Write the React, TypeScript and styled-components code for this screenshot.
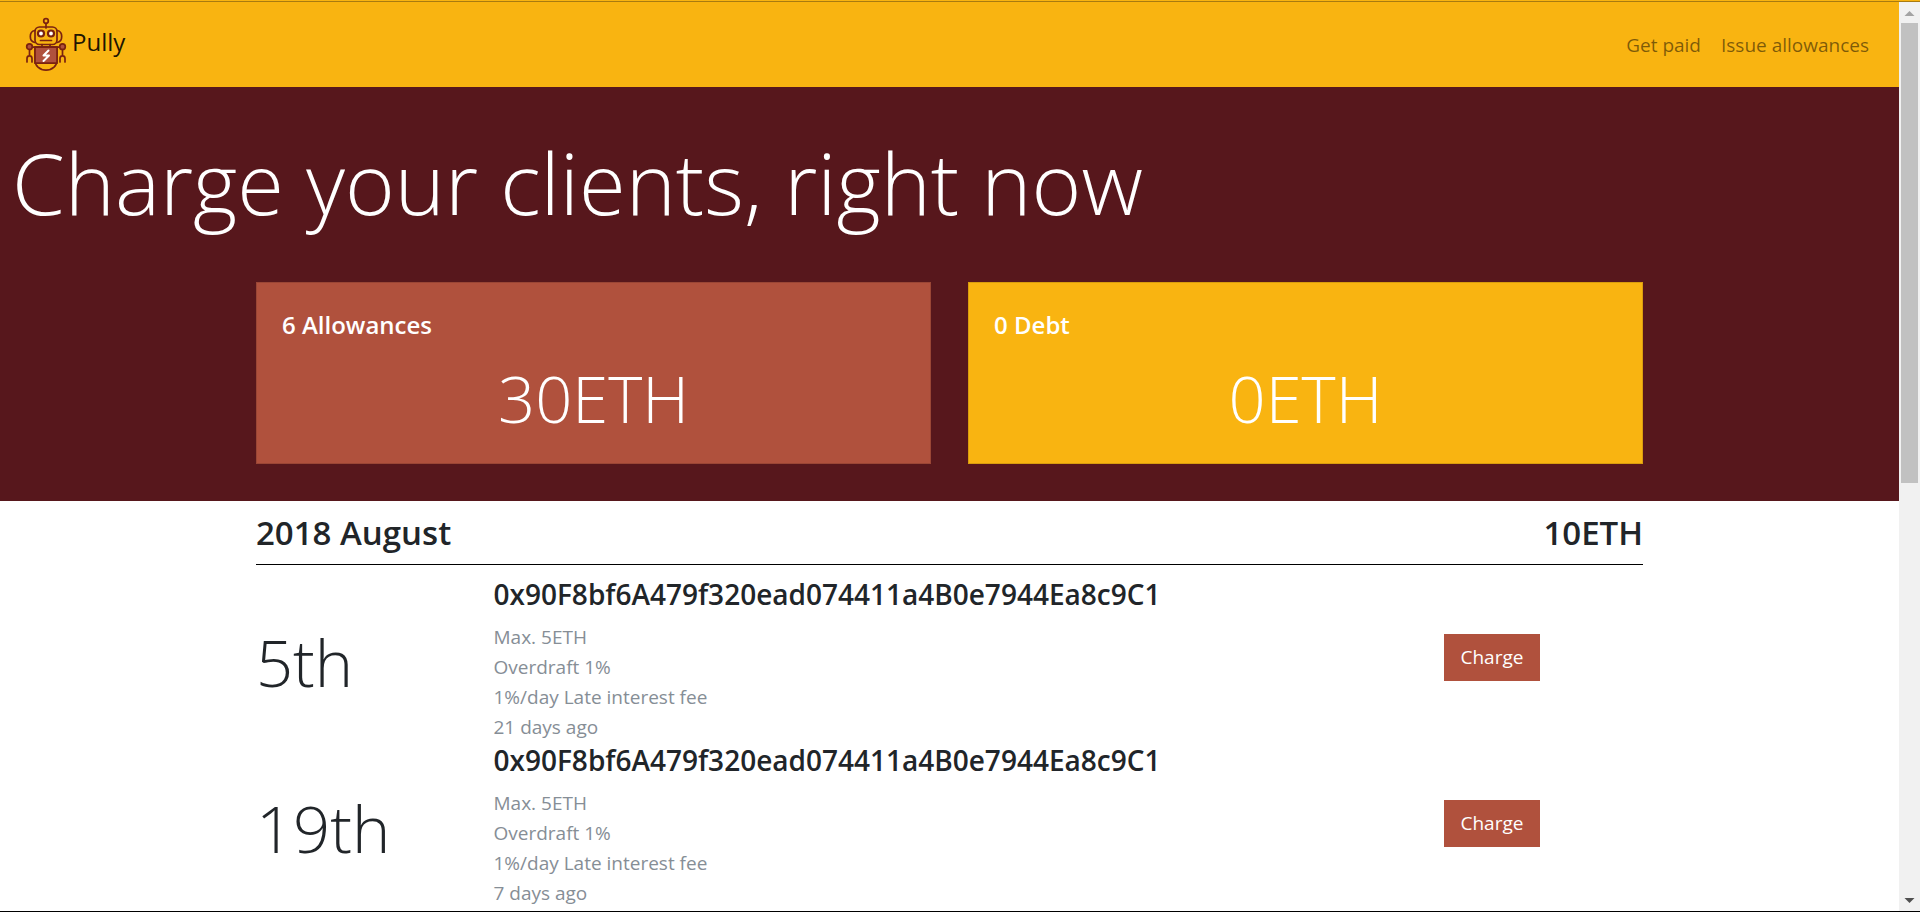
import React from "react";
import styled, { createGlobalStyle } from "styled-components";

const amber = "#f9b411";
const wine = "#57171c";
const brick = "#b0513d";
const ink = "#212529";

const GlobalStyle = createGlobalStyle`
  *, *::before, *::after { box-sizing: border-box; }
  body {
    margin: 0;
    overflow: hidden;
    background: #fff;
    color: ${ink};
    font: 400 19px/30px "Open Sans", "Noto Sans", sans-serif;
  }
  h1, h2, h3, h4, p { margin: 0; }
`;

const Shell = styled.div`
  display: flex;
  flex-direction: column;
  height: 100vh;
  border-bottom: 1px solid #000;
`;

const TopEdge = styled.div`
  flex: none;
  height: 2px;
  background: ${amber};
  border-bottom: 1px solid #a97b10;
`;

const Viewport = styled.div`
  flex: 1;
  display: flex;
  min-height: 0;
`;

const Page = styled.div`
  flex: 1;
  min-width: 0;
  overflow: hidden;
`;

const Nav = styled.nav`
  display: flex;
  align-items: center;
  justify-content: space-between;
  height: 85px;
  padding: 0 20px;
  background: ${amber};
`;

const Brand = styled.a`
  display: flex;
  align-items: center;
  gap: 2px;
  color: rgba(0, 0, 0, 0.9);
  font-size: 24px;
  line-height: 38px;
  text-decoration: none;

  span {
    padding-bottom: 6px;
  }
`;

const NavLinks = styled.div`
  display: flex;
  gap: 20px;
  padding-right: 10px;
`;

const NavLink = styled.a`
  color: rgba(0, 0, 0, 0.5);
  text-decoration: none;
`;

const Hero = styled.header`
  padding: 41px 0 37px;
  background: ${wine};
  color: #fff;
`;

const HeroTitle = styled.h1`
  padding: 0 12px;
  margin-bottom: 46px;
  font-size: 85px;
  line-height: 108px;
  font-weight: 300;
`;

const Container = styled.div`
  max-width: 1425px;
  margin: 0 auto;
  padding: 0 19px;
`;

const Cards = styled.div`
  display: grid;
  grid-template-columns: 1fr 1fr;
  gap: 37px;
`;

const Card = styled.section<{ $tone: string }>`
  padding: 27px 25px 23px;
  border: 1px solid rgba(0, 0, 0, 0.125);
  background: ${(p) => p.$tone};
`;

const CardTitle = styled.h2`
  margin-bottom: 16px;
  font-size: 24px;
  line-height: 30px;
  font-weight: 600;
`;

const BigText = styled.p`
  font-size: 65px;
  line-height: 84px;
  font-weight: 300;
`;

const CardAmount = styled(BigText)`
  text-align: center;
`;

const Day = styled(BigText)`
  padding-top: 6px;
`;

const MonthHeader = styled.div`
  display: flex;
  justify-content: space-between;
  padding: 10px 0;
  margin-bottom: 11px;
  border-bottom: 1px solid #000;
`;

const MonthTitle = styled.h3`
  font-size: 33px;
  line-height: 43px;
  font-weight: 600;
`;

const Allowance = styled.article`
  display: grid;
  grid-template-columns: 2fr 8fr 2fr;
  align-items: center;
  margin: 0 -19px;
`;

const Cell = styled.div`
  padding: 0 19px;
`;

const ActionCell = styled(Cell)`
  padding-bottom: 4px;
`;

const Address = styled.h4`
  margin-bottom: 10px;
  font-size: 28px;
  line-height: 36px;
  font-weight: 600;
`;

const Detail = styled.p`
  color: #868e96;
`;

const ChargeButton = styled.button`
  display: block;
  height: 47px;
  padding: 0 17px;
  border: 0;
  background: ${brick};
  color: #fff;
  font: inherit;
`;

const Scrollbar = styled.div`
  flex: none;
  display: flex;
  flex-direction: column;
  width: 21px;
  padding: 0 2px;
  background: #f1f1f1;
`;

const ScrollArrow = styled.svg`
  flex: none;
  width: 17px;
  height: 21px;
`;

const ScrollTrack = styled.div`
  flex: 1;
`;

const ScrollThumb = styled.div`
  height: 53%;
  background: #c1c1c1;
`;

const Robot = () => (
  <svg width="50" height="60" viewBox="0 0 50 60" fill="none" stroke="#7a2210" strokeWidth="1.7" strokeLinecap="round" strokeLinejoin="round" aria-hidden="true">
    <circle cx="26" cy="6" r="2.3" />
    <path d="M26 8.5v4.5" />
    <path d="M14.8 15.500c-6 1-6 11 0 12M37.200 15.500c6 1 6 11 0 12" />
    <rect x="15" y="12" width="22" height="17.500" rx="4.500" />
    <circle cx="21" cy="18.500" r="3" fill="#fff" strokeWidth="2.200" />
    <circle cx="31" cy="18.500" r="3" fill="#fff" strokeWidth="2.200" />
    <path d="M20.500 25.500h11M22 29.500v2.500M30 29.500v2.500M11 32.200h30" />
    <path d="M15 32.200h22v13c0 3.500-1 5-3 7-4.500 4-11.500 4-16 0-2-2-3-3.500-3-7z" />
    <path d="M15 32.200h22v16H15z" fill={brick} />
    <circle cx="9.500" cy="31.700" r="2.800" fill={brick} />
    <circle cx="42.500" cy="31.700" r="2.800" fill={brick} />
    <path d="M9.500 34.500v6M7 47v-3.500c0-3.500 5-3.500 5 0V47M42.500 34.500v6M40 47v-3.500c0-3.500 5-3.500 5 0V47" />
    <path d="M28.500 35.500l-5 5h5.500l-5.500 5.500" stroke="#fff" strokeWidth="2" />
  </svg>
);

const address = "0x90F8bf6A479f320ead074411a4B0e7944Ea8c9C1";

const allowances = [
  { day: "5th", due: "21 days ago" },
  { day: "19th", due: "7 days ago" },
];

export default function App() {
  return (
    <>
      <GlobalStyle />
      <Shell>
        <TopEdge />
        <Viewport>
          <Page>
            <Nav>
              <Brand href="#">
                <Robot />
                <span>Pully</span>
              </Brand>
              <NavLinks>
                <NavLink href="#paid">Get paid</NavLink>
                <NavLink href="#issue">Issue allowances</NavLink>
              </NavLinks>
            </Nav>
            <Hero>
              <HeroTitle>Charge your clients, right now</HeroTitle>
              <Container>
                <Cards>
                  <Card $tone={brick}>
                    <CardTitle>6 Allowances</CardTitle>
                    <CardAmount>30ETH</CardAmount>
                  </Card>
                  <Card $tone={amber}>
                    <CardTitle>0 Debt</CardTitle>
                    <CardAmount>0ETH</CardAmount>
                  </Card>
                </Cards>
              </Container>
            </Hero>
            <Container as="main">
              <MonthHeader>
                <MonthTitle>2018 August</MonthTitle>
                <MonthTitle as="p">10ETH</MonthTitle>
              </MonthHeader>
              {allowances.map((item) => (
                <Allowance key={item.day}>
                  <Cell>
                    <Day>{item.day}</Day>
                  </Cell>
                  <Cell>
                    <Address>{address}</Address>
                    <Detail>Max. 5ETH</Detail>
                    <Detail>Overdraft 1%</Detail>
                    <Detail>1%/day Late interest fee</Detail>
                    <Detail>{item.due}</Detail>
                  </Cell>
                  <ActionCell>
                    <ChargeButton type="button">Charge</ChargeButton>
                  </ActionCell>
                </Allowance>
              ))}
            </Container>
          </Page>
          <Scrollbar aria-hidden="true">
            <ScrollArrow viewBox="0 0 17 21">
              <path d="M3.500 14l5-5 5 5z" fill="#a3a3a3" />
            </ScrollArrow>
            <ScrollTrack>
              <ScrollThumb />
            </ScrollTrack>
            <ScrollArrow viewBox="0 0 17 21">
              <path d="M3.500 8l5 5 5-5z" fill="#505050" />
            </ScrollArrow>
          </Scrollbar>
        </Viewport>
      </Shell>
    </>
  );
}
